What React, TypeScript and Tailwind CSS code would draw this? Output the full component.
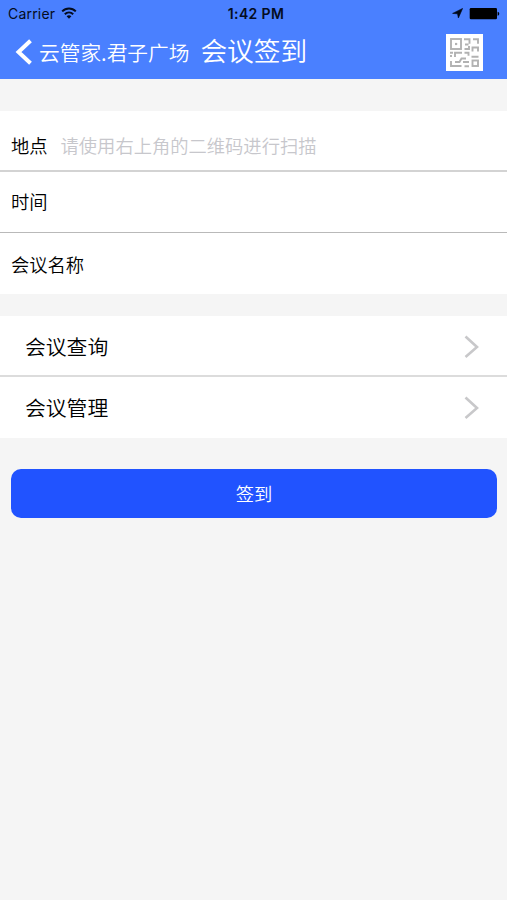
import React from "react";

function WifiIcon() {
  return (
    <svg width="16" height="13" viewBox="0 0 16 13" className="block text-[#040c20]">
      <g fill="none" stroke="currentColor" strokeWidth="2">
        <path d="M1.2 4.4C5 .6 11 .6 14.8 4.4" />
        <path d="M3.8 7.2C6.2 4.9 9.8 4.9 12.2 7.2" />
      </g>
      <path d="M5.6 9.2C7 8 9 8 10.4 9.2L8 11.8Z" fill="currentColor" />
    </svg>
  );
}

function LocationIcon() {
  return (
    <svg width="11" height="11" viewBox="0 0 11 11" className="block">
      <path d="M10.6 0.4L6.4 10L5.5 5.8L0.6 5.4Z" fill="#000818" stroke="#000818" strokeWidth="0.6" />
    </svg>
  );
}

function BatteryIcon() {
  return (
    <svg width="31" height="12" viewBox="0 0 31 12" className="block">
      <rect x="0.7" y="0.1" width="27.3" height="11.2" rx="1.2" fill="#000" />
      <path d="M28.6 3.8C30.8 4.1 30.8 7.5 28.6 7.8Z" fill="#000" />
    </svg>
  );
}

function QrIcon() {
  return (
    <svg width="37" height="37" viewBox="0 0 37 37" className="block">
      <rect width="37" height="37" fill="#fff" />
      <g fill="none" stroke="#b2b2b2" strokeWidth="1.9">
        <rect x="5" y="5" width="10" height="10" />
        <path d="M9 10h2.2" strokeWidth="2.2" />
        <path d="M18 5.300h5.500v4.500M27 5.300h5v4.500M19 10.500h3.500M18.500 15h4.500v-3M26.500 17.500v-4h5.500v4" />
        <path d="M4 18.700h3M9 23v-4.300h7M18.500 18.700h4v3M5 21v2" />
        <path d="M5 27v5h10.500M9 28h4.500l2-3.500h4.500M17 28h6M18.500 32.300h4.500M25.500 22.700h7" />
        <rect x="26.500" y="26.500" width="5.500" height="5.500" />
      </g>
    </svg>
  );
}

function Chevron() {
  return (
    <svg width="16" height="24" viewBox="0 0 16 24" className="block">
      <path d="M1.5 1.5L13 12L1.5 22" fill="none" stroke="#c8c8ca" strokeWidth="2.6" />
    </svg>
  );
}

function StatusBar() {
  return (
    <div className="grid h-[27px] grid-cols-3 items-center pl-2 pr-[7px] font-['Inter'] font-normal text-[#040c20]">
      <div className="flex items-center gap-[6px]">
        <span className="pt-px text-[14px] leading-[26px] tracking-[0.2px]">Carrier</span>
        <WifiIcon />
      </div>
      <span className="whitespace-nowrap pl-1 pt-px text-center text-[14px] font-semibold leading-[26px] tracking-[0.35px]">1:42 PM</span>
      <div className="flex items-center justify-end gap-[6px]">
        <LocationIcon />
        <BatteryIcon />
      </div>
    </div>
  );
}

function Field({ label, placeholder, className }: { label: string; placeholder?: string; className: string }) {
  return (
    <div className={"flex items-center gap-[13px] pl-[11px] text-[18.3px] text-black " + className}>
      <span>{label}</span>
      {placeholder && <span className="text-[#c7c7cc]">{placeholder}</span>}
    </div>
  );
}

function LinkRow({ label, className }: { label: string; className: string }) {
  return (
    <div className={"flex items-center justify-between pl-[25px] pr-[27px] text-[20.8px] text-black " + className}>
      <span>{label}</span>
      <Chevron />
    </div>
  );
}

export default function App() {
  return (
    <main className="h-[900px] w-full overflow-hidden bg-[#f5f5f5] font-['Noto_Sans_CJK_SC',sans-serif] font-[350] leading-none">
      <header className="h-[79px] bg-[#4a80ff] text-white">
        <StatusBar />
        <nav className="flex h-[50px] items-center pl-[15px] pr-6">
          <svg width="18" height="26" viewBox="0 0 18 26" className="block">
            <path d="M15.5 1.8L3.5 13L15.5 24.2" fill="none" stroke="#fff" strokeWidth="4" />
          </svg>
          <span className="ml-[6px] whitespace-nowrap text-[20.7px]">云管家.君子广场</span>
          <h1 className="ml-[11px] -mt-1 whitespace-nowrap text-[26.7px] font-[350]">会议签到</h1>
          <div className="ml-auto">
            <QrIcon />
          </div>
        </nav>
      </header>

      <section className="mt-8 bg-white">
        <Field label="地点" placeholder="请使用右上角的二维码进行扫描" className="h-[61px] border-b-2 border-[#d3d3d3] pt-[10px]" />
        <Field label="时间" className="h-[61px] border-b border-[#b9b9b9] pb-px" />
        <Field label="会议名称" className="h-[61px] pt-[2px]" />
      </section>

      <section className="mt-[22px] bg-white">
        <LinkRow label="会议查询" className="h-[61px] border-b-2 border-[#dcdcdc] pt-[2px]" />
        <LinkRow label="会议管理" className="h-[61px]" />
      </section>

      <div className="pl-[11px] pr-[10px] pt-[31px]">
        <button className="block h-[49px] w-full rounded-[10px] bg-[#2153ff] text-[18.3px] font-[350] text-white">签到</button>
      </div>
    </main>
  );
}
